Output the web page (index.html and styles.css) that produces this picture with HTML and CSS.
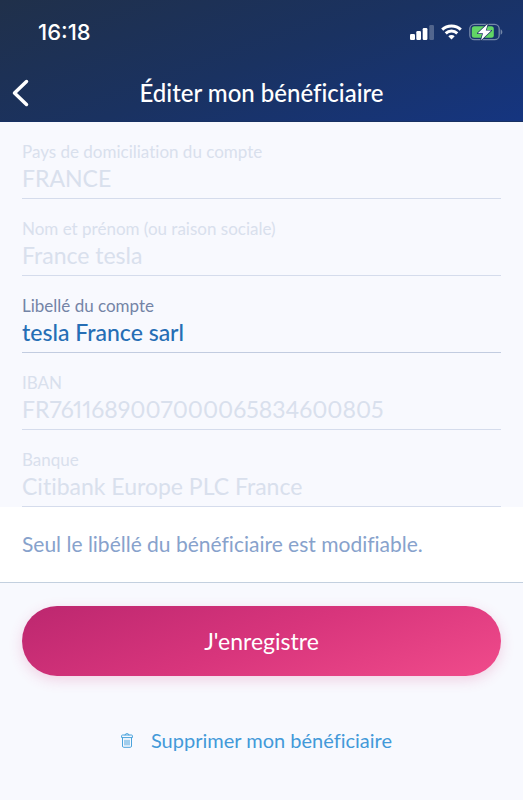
FILE: index.html
```html
<!DOCTYPE html>
<html lang="fr">
<head>
<meta charset="utf-8">
<meta name="viewport" content="width=device-width, initial-scale=1">
<title>Éditer mon bénéficiaire</title>
<link rel="stylesheet" href="styles.css">
</head>
<body>
<header class="header">
  <div class="status">
    <time class="clock">16:18</time>
    <div class="status-icons">
      <svg width="24" height="16" viewBox="0 0 24 16" fill="#fff" aria-hidden="true">
        <rect x="0" y="10" width="5" height="6" rx="1.2"/>
        <rect x="6.3" y="7" width="4.700" height="9" rx="1.2"/>
        <rect x="12.700" y="4" width="4.700" height="12" rx="1.2"/>
        <rect x="19.300" y="1" width="4.700" height="15" rx="1.2" opacity=".25"/>
      </svg>
      <svg width="21" height="16" viewBox="0 0 21 16" fill="none" stroke="#fff" stroke-width="3" aria-hidden="true">
        <path d="M1.200 5.600C6.400.7 14.600.7 19.800 5.600"/>
        <path d="M4.700 9.300C8 6.300 13 6.300 16.300 9.300"/>
        <path d="M7.300 12.200C9.200 10.600 11.800 10.600 13.700 12.200L10.500 15.600Z" fill="#fff" stroke="none"/>
      </svg>
      <svg width="34" height="18" viewBox="0 0 34 18" aria-hidden="true">
        <rect x=".8" y="1.300" width="29.400" height="15.400" rx="4.500" fill="none" stroke="#7487a8" stroke-width="1.300"/>
        <path d="M31.600 6.200C33.900 7.200 33.900 10.800 31.600 11.800Z" fill="#7487a8"/>
        <rect x="2.800" y="3.300" width="22" height="11.400" rx="2.500" fill="#62d565"/>
        <path d="M18.800.8L8.700 10.200H14L12 17.200L22.300 7.600H16.800Z" fill="#fff" stroke="#1a3261" stroke-width="1.400" stroke-linejoin="round" paint-order="stroke"/>
      </svg>
    </div>
  </div>
  <div class="navbar">
    <button class="back" type="button" aria-label="Retour">
      <svg width="18" height="28" viewBox="0 0 18 28" fill="none" stroke="#fff" stroke-width="3.500" stroke-linecap="round" stroke-linejoin="round" aria-hidden="true"><path d="M14.500 2.500L2.500 14L14.500 25.500"/></svg>
    </button>
    <h1 class="title">Éditer mon bénéficiaire</h1>
  </div>
</header>
<main>
  <form class="form">
    <div class="fields">
      <div class="field">
        <label for="country">Pays de domiciliation du compte</label>
        <input id="country" type="text" value="FRANCE" disabled>
      </div>
      <div class="field">
        <label for="name">Nom et prénom (ou raison sociale)</label>
        <input id="name" type="text" value="France tesla" disabled>
      </div>
      <div class="field field-active">
        <label for="alias">Libellé du compte</label>
        <input id="alias" type="text" value="tesla France sarl">
      </div>
      <div class="field">
        <label for="iban">IBAN</label>
        <input id="iban" type="text" value="FR7611689007000065834600805" disabled>
      </div>
      <div class="field">
        <label for="bank">Banque</label>
        <input id="bank" type="text" value="Citibank Europe PLC France" disabled>
      </div>
    </div>
    <p class="notice">Seul le libéllé du bénéficiaire est modifiable.</p>
    <div class="actions">
      <button class="save" type="submit">J'enregistre</button>
      <button class="delete" type="button">
        <svg width="12" height="15" viewBox="0 0 12 15" fill="none" stroke="#4aa3dc" stroke-width="1" stroke-linecap="round" stroke-linejoin="round" aria-hidden="true"><path d="M.6 4.200V2.800Q.6 2 1.500 2H10.500Q11.400 2 11.400 2.800V4.200ZM4 2Q4 .6 6 .6T8 2M1.500 4.400V13Q1.500 14.300 2.700 14.300H9.300Q10.500 14.300 10.500 13V4.400M4 7.200V12M6 7.200V12M8 7.200V12"/></svg>
        <span>Supprimer mon bénéficiaire</span>
      </button>
    </div>
  </form>
</main>
</body>
</html>
```
FILE: styles.css
```css
* {
  box-sizing: border-box;
}

body {
  margin: 0;
  min-height: 100vh;
  background: #f8f9fe;
  color: #d9e0ed;
  font-family: Lato, "Open Sans", sans-serif;
  font-variant-ligatures: none;
}

button,
input {
  padding: 0;
  border: 0;
  background: none;
  font-family: inherit;
  font-variant-ligatures: none;
}

button {
  cursor: pointer;
}

svg {
  display: block;
}

.header {
  background: linear-gradient(160deg, #20304a 0%, #1a3261 50%, #153580 100%);
  border-bottom: 1px solid #183163;
  color: #fff;
}

.status {
  display: flex;
  align-items: center;
  justify-content: space-between;
  height: 64px;
  padding: 0 20px 0 38px;
}

.clock {
  font: 500 22px/24px Inter, sans-serif;
}

.status-icons {
  display: flex;
  align-items: center;
  gap: 7px;
}

.navbar {
  display: grid;
  grid-template-columns: 48px 1fr 48px;
  align-items: center;
  height: 57px;
}

.back {
  padding: 8px 12px;
}

.title {
  margin: 0;
  font-size: 24px;
  line-height: 28px;
  font-weight: 500;
  text-align: center;
}

.fields {
  padding: 0 22px;
}

.field {
  display: flex;
  flex-direction: column;
  gap: 2px;
  padding: 20px 0 6px;
  border-bottom: 1px solid #d5dcec;
}

.field label {
  font-size: 17px;
  line-height: 20px;
}

.field input {
  width: 100%;
  height: 28px;
  color: #d9e0ed;
  font-size: 23px;
  line-height: 28px;
  font-variant-numeric: proportional-nums;
}

.field-active {
  border-color: #c2cce0;
}

.field-active label {
  color: #7484a6;
}

.field-active input {
  color: #266eb5;
  font-weight: 500;
  outline: 0;
}

.notice {
  margin: 0;
  padding: 23px 22px 24px;
  border-bottom: 1px solid #c3d0df;
  background: #fff;
  color: #87a2cc;
  font-size: 21px;
  line-height: 28px;
}

.actions {
  display: flex;
  flex-direction: column;
  align-items: center;
  gap: 48px;
  padding: 23px 22px;
}

.save {
  width: 100%;
  height: 70px;
  border-radius: 35px;
  background: linear-gradient(160deg, #bc276f 0%, #d8357c 50%, #f04b8b 100%);
  box-shadow: 0 4px 14px rgb(216 53 124 / 20%);
  color: #fff;
  font-size: 23px;
  line-height: 28px;
}

.delete {
  display: flex;
  align-items: center;
  gap: 18px;
  padding-right: 10px;
  color: #4399d9;
  font-size: 20px;
  line-height: 32px;
}
```
